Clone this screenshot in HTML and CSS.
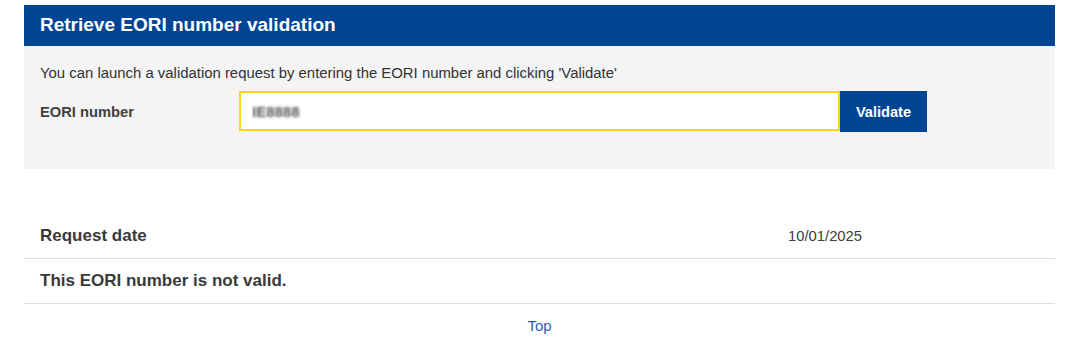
FILE: index.html
```html
<!doctype html>
<html lang="en">
  <head>
    <meta charset="UTF-8" />
    <meta name="viewport" content="width=device-width, initial-scale=1.0" />
    <title>Retrieve EORI number validation</title>
    <link rel="stylesheet" href="styles.css">
  </head>
  <body>
    <div class="page">
      <h1 class="panel-title">Retrieve EORI number validation</h1>
      <div class="panel">
        <p class="intro">You can launch a validation request by entering the EORI number and clicking 'Validate'</p>
        <form class="form-row" onsubmit="return false">
          <label class="form-label" for="eori">EORI number</label>
          <div class="form-field">
            <input id="eori" class="eori-input" type="text" value="IE8888" />
            <button class="btn-validate" type="submit">Validate</button>
          </div>
        </form>
      </div>

      <div class="results">
        <div class="result-row">
          <span class="result-label">Request date</span>
          <span class="result-value">10/01/2025</span>
        </div>
        <div class="result-row">
          <span class="result-label">This EORI number is not valid.</span>
        </div>
      </div>

      <div class="top-link"><a href="#">Top</a></div>
    </div>
  </body>
</html>
```

FILE: styles.css
```css
body {
  margin: 0;
  font-family: "Liberation Sans", Arial, sans-serif;
  color: #404040;
  background: #fff;
}

.page {
  margin: 5px 25px 0 24px;
}

.panel-title {
  margin: 0;
  height: 41px;
  line-height: 39px;
  padding: 0 16px;
  background: #004494;
  color: #fff;
  font-size: 19px;
  font-weight: bold;
}

.panel {
  background: #f4f4f4;
  padding: 17px 16px 37px;
}

.intro {
  margin: 0 0 8px;
  font-size: 14.9px;
  line-height: 20px;
  color: #333;
}

.form-row {
  display: flex;
  align-items: center;
  margin: 0;
}

.form-label {
  width: 199px;
  font-size: 14.7px;
  font-weight: bold;
  color: #404040;
}

.form-field {
  display: flex;
}

/* the number is blurred out in the screenshot */
.eori-input {
  box-sizing: border-box;
  width: 601px;
  height: 40px;
  margin: 0;
  padding: 0 11px;
  border: 2px solid #ffd617;
  background: #fff;
  font-family: inherit;
  font-size: 15px;
  font-weight: bold;
  color: transparent;
  text-shadow: 0 0 3px rgba(70, 70, 70, 0.9);
  outline: none;
}

.btn-validate {
  width: 87px;
  height: 41px;
  margin: 0;
  border: none;
  background: #004494;
  color: #fff;
  font-family: inherit;
  font-size: 14.6px;
  font-weight: bold;
  cursor: pointer;
}

.results {
  margin-top: 45px;
}

.result-row {
  display: flex;
  align-items: center;
  height: 44px;
  padding: 0 16px;
  border-bottom: 1px solid #dcdcdc;
}

.result-label {
  width: 748px;
  font-size: 17px;
  font-weight: bold;
  color: #3a3a3a;
}

.result-value {
  font-size: 14.8px;
  color: #404040;
}

.top-link {
  text-align: center;
  padding-top: 13px;
  font-size: 15px;
}

.top-link a {
  color: #2a5db0;
  text-decoration: none;
}
```
